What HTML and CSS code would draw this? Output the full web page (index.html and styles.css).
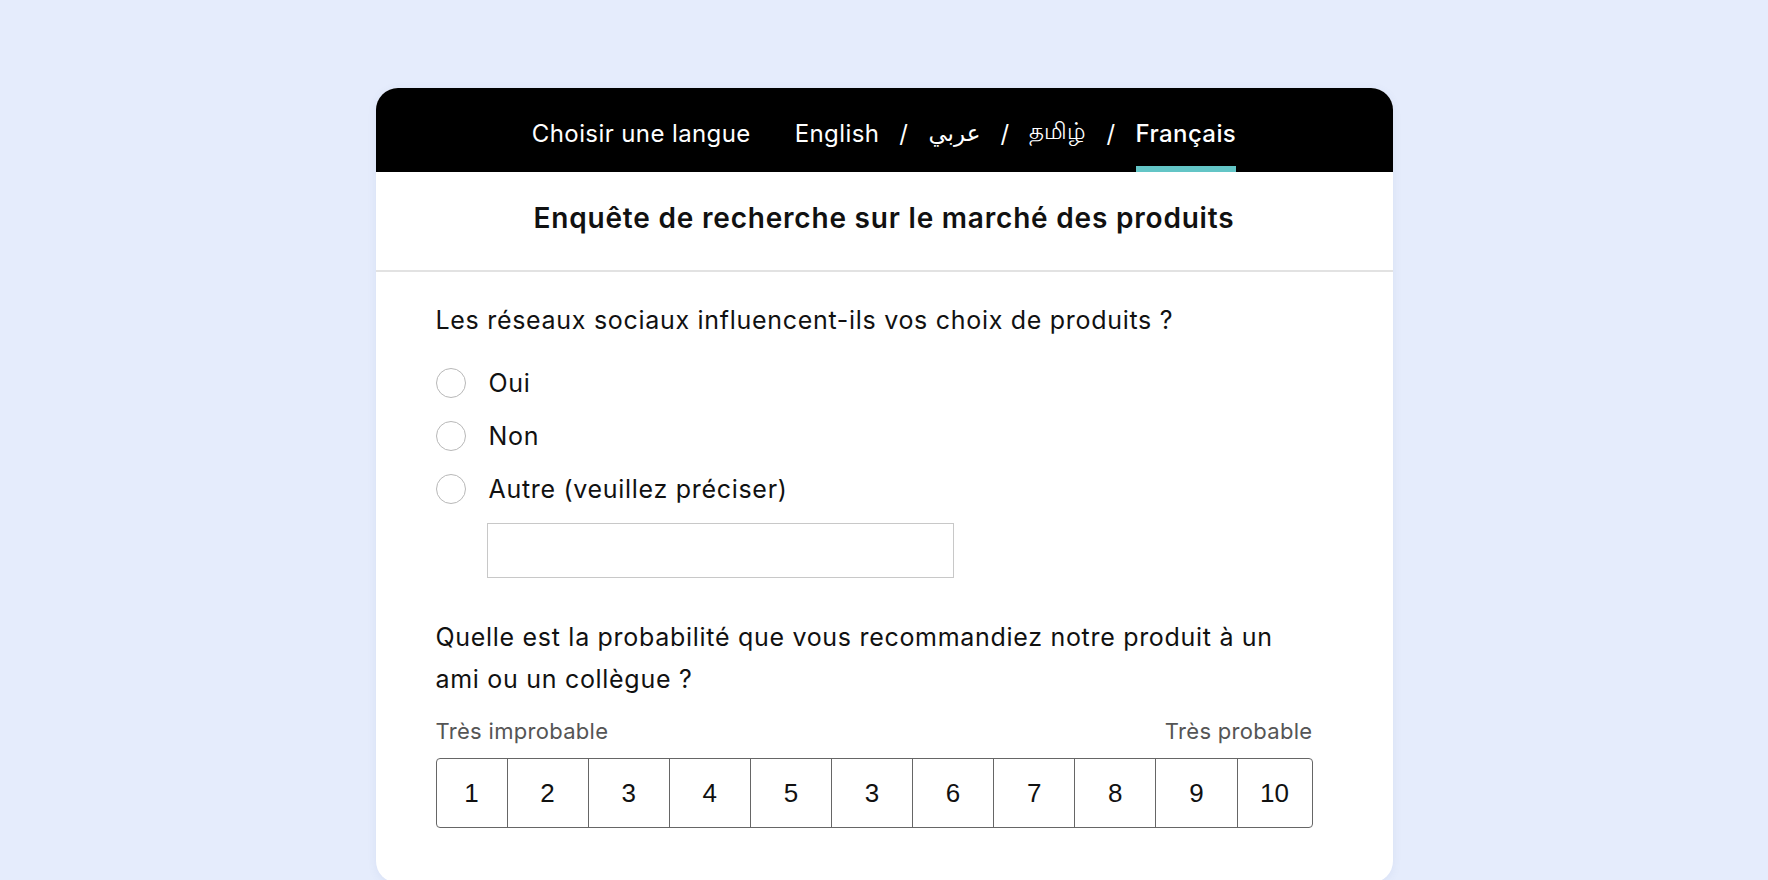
FILE: index.html
```html
<!DOCTYPE html>
<html lang="fr">
<head>
  <meta charset="UTF-8">
  <meta name="viewport" content="width=device-width, initial-scale=1.0">
  <title>Enquête de recherche sur le marché des produits</title>
  <link rel="stylesheet" href="styles.css">
</head>
<body>
  <div class="survey">
    <!-- Language bar -->
    <div class="lang-bar">
      <span class="lang-label">Choisir une langue</span>
      <span class="lang">English</span>
      <span class="sep">/</span>
      <span class="lang lang-ar">عربي</span>
      <span class="sep">/</span>
      <span class="lang lang-ta">தமிழ்</span>
      <span class="sep">/</span>
      <span class="lang active">Français</span>
    </div>

    <h1 class="survey-title">Enquête de recherche sur le marché des produits</h1>

    <div class="survey-body">
      <!-- Question 1 -->
      <div class="question">
        <p class="question-text">Les réseaux sociaux influencent-ils vos choix de produits ?</p>
        <ul class="options">
          <li class="option"><span class="radio"></span>Oui</li>
          <li class="option"><span class="radio"></span>Non</li>
          <li class="option"><span class="radio"></span>Autre (veuillez préciser)</li>
        </ul>
        <div class="other-input"></div>
      </div>

      <!-- Question 2 -->
      <div class="question">
        <p class="question-text">Quelle est la probabilité que vous recommandiez notre produit à un ami ou un collègue ?</p>
        <div class="scale-labels">
          <span>Très improbable</span>
          <span>Très probable</span>
        </div>
        <div class="scale">
          <div class="cell">1</div>
          <div class="cell">2</div>
          <div class="cell">3</div>
          <div class="cell">4</div>
          <div class="cell">5</div>
          <div class="cell">3</div>
          <div class="cell">6</div>
          <div class="cell">7</div>
          <div class="cell">8</div>
          <div class="cell">9</div>
          <div class="cell">10</div>
        </div>
      </div>
    </div>
  </div>
</body>
</html>
```

FILE: styles.css
```css
/* Page background */
body {
  margin: 0;
  padding: 88px 0 0;
  background: #e5ecfc;
  font-family: Inter, "Noto Sans", "DejaVu Sans", sans-serif;
  color: #111;
  overflow: hidden;
}

/* Survey card */
.survey {
  width: 1017px;
  height: 795px;
  margin: 0 auto;
  background: #fff;
  border-radius: 22px;
  overflow: hidden;
  box-shadow: 0 2px 10px rgba(80, 100, 160, 0.08);
}

/* Language bar */
.lang-bar {
  height: 84px;
  background: #000;
  color: #fff;
  display: flex;
  justify-content: center;
  align-items: stretch;
  font-size: 24px;
  letter-spacing: 0.4px;
}

.lang-bar span {
  display: flex;
  align-items: center;
  padding-top: 6px;
}

.lang-label {
  margin-right: 44px;
}

.sep {
  margin: 0 20px;
}

.lang-ar,
.lang-ta {
  font-family: "DejaVu Sans", "Noto Sans", sans-serif;
  font-size: 23px;
  letter-spacing: 0;
}

.lang.active {
  font-weight: 500;
  box-shadow: inset 0 -6px 0 #63c5c6;
}

/* Title */
.survey-title {
  margin: 0;
  height: 100px;
  padding-bottom: 6px;
  box-sizing: border-box;
  display: flex;
  align-items: center;
  justify-content: center;
  font-size: 28px;
  font-weight: 600;
  letter-spacing: 0.8px;
  border-bottom: 2px solid #e2e2e2;
}

/* Body */
.survey-body {
  width: 877px;
  padding: 27px 0 0 60px;
}

.question-text {
  margin: 0;
  font-size: 25px;
  letter-spacing: 0.7px;
  line-height: 42px;
}

.options {
  list-style: none;
  margin: 15px 0 0;
  padding: 0;
}

.option {
  display: flex;
  align-items: center;
  height: 53px;
  font-size: 25px;
  letter-spacing: 0.7px;
}

.radio {
  width: 28px;
  height: 28px;
  border: 1.5px solid #b8b8b8;
  border-radius: 50%;
  margin-right: 23px;
}

.other-input {
  width: 465px;
  height: 53px;
  margin: 8px 0 0 51px;
  border: 1px solid #c8c8c8;
}

.question + .question {
  margin-top: 38px;
}

.scale-labels {
  display: flex;
  justify-content: space-between;
  margin-top: 18px;
  font-size: 22px;
  letter-spacing: 0.3px;
  color: #555;
}

.scale {
  display: grid;
  grid-template-columns: 70px repeat(9, 1fr) 75px;
  height: 68px;
  margin-top: 14px;
  border: 1px solid #666;
  border-radius: 4px;
}

.cell {
  display: flex;
  align-items: center;
  justify-content: center;
  font-family: "Liberation Sans", Arial, sans-serif;
  font-size: 26px;
  border-left: 1px solid #666;
}

.cell:first-child {
  border-left: none;
}
```
